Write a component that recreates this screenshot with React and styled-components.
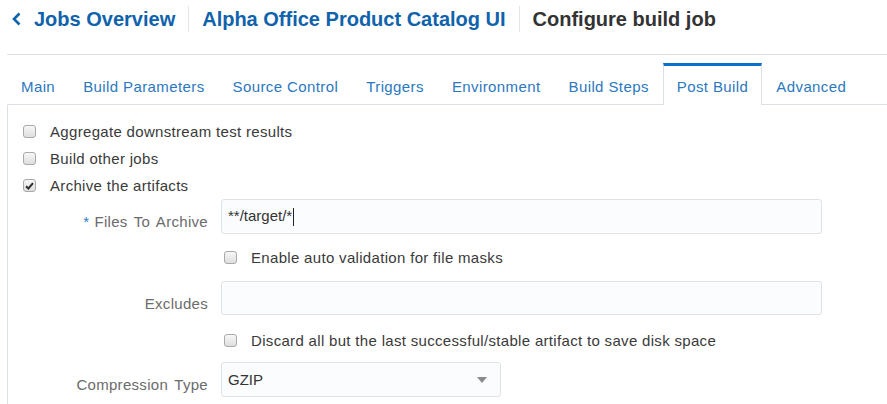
import React from "react";
import styled, { createGlobalStyle } from "styled-components";

const Global = createGlobalStyle`
  html, body { margin: 0; padding: 0; background: #fff; }
  body { font-family: "Liberation Sans", Arial, sans-serif; color: #333; }
  * { box-sizing: border-box; }
`;

const Page = styled.div`
  width: 887px;
  height: 404px;
  overflow: hidden;
  background: #fff;
`;

const Header = styled.div`
  margin-left: 7px;
  height: 55px;
  border-bottom: 1px solid #dfe3e7;
`;

const Crumbs = styled.div`
  display: flex;
  align-items: center;
  height: 38px;
  padding-left: 5px;
`;

const BackLink = styled.a`
  display: flex;
  align-items: center;
  gap: 13px;
  color: #0f62ac;
  font-size: 20px;
  font-weight: bold;
  text-decoration: none;
`;

const Crumb = styled.span`
  color: ${(p) => (p.$current ? "#333" : "#0f62ac")};
  font-size: 20px;
  font-weight: bold;
  white-space: nowrap;
`;

const Sep = styled.span`
  width: 1px;
  height: 26px;
  background: #e2e6e9;
  margin: 0 13px;
`;

const TabBar = styled.div`
  display: flex;
  margin: 8px 0 0 7px;
  height: 41px;
  position: relative;
  z-index: 1;
`;

const Tab = styled.div`
  height: 41px;
  padding: 2px 13px 0;
  display: flex;
  align-items: center;
  font-size: 15px;
  letter-spacing: 0.4px;
  color: #2b78bf;
  white-space: nowrap;
  border: 1px solid transparent;
  border-top: 3px solid transparent;
  border-bottom: none;
  ${(p) =>
    p.$active &&
    `
    border-color: #dbe0e4;
    border-top-color: #0a70cc;
    background: #fff;
    height: 42px;
    margin-bottom: -1px;
  `}
`;

const Panel = styled.div`
  margin-left: 7px;
  border-top: 1px solid #dbe0e4;
  border-left: 1px solid #dbe0e4;
  border-top-left-radius: 2px;
  padding: 13px 0 0 15px;
  height: 300px;
`;

const CheckRow = styled.label`
  display: flex;
  align-items: center;
  height: 27px;
  gap: 14px;
  font-size: 15px;
  letter-spacing: 0.32px;
  color: #3a3a3a;
  margin: ${(p) => p.$m || "0"};
  padding-left: ${(p) => p.$indent || "0"};
`;

const Box = styled.span`
  width: 13px;
  height: 13px;
  flex: none;
  border: 1px solid #a9a9a9;
  border-radius: 3px;
  background: linear-gradient(#f7f7f7, #dedede);
  display: flex;
  align-items: center;
  justify-content: center;
`;

const Check = ({ checked }) => (
  <Box>
    {checked && (
      <svg width="9" height="8" viewBox="0 0 9 8">
        <path d="M1 4.2 L3.4 6.5 L8 1.2" fill="none" stroke="#2f2f2f" strokeWidth="2" />
      </svg>
    )}
  </Box>
);

const FormRow = styled.div`
  display: flex;
  align-items: flex-start;
  gap: 13px;
`;

const Label = styled.div`
  width: 185px;
  text-align: right;
  padding-top: 13px;
  line-height: 20px;
  font-size: 15px;
  letter-spacing: 0.3px;
  word-spacing: 2px;
  color: #6b6b6b;
  white-space: nowrap;
`;

const Star = styled.span`
  color: #2a7ec4;
  margin-right: 5px;
`;

const Field = styled.div`
  width: ${(p) => p.$w}px;
  height: ${(p) => p.$h || 35}px;
  border: 1px solid #dfe3e6;
  border-radius: 3px;
  background: #fbfcfd;
  display: flex;
  align-items: center;
  padding: 0 7px 0 6px;
  font-size: 15px;
  color: #333;
  justify-content: space-between;
`;

const Caret = styled.span`
  display: inline-block;
  width: 1px;
  height: 18px;
  background: #222;
  vertical-align: middle;
  margin-left: 1px;
`;

const Arrow = styled.span`
  width: 0;
  height: 0;
  border-left: 5px solid transparent;
  border-right: 5px solid transparent;
  border-top: 6px solid #8a8a8a;
  margin-right: 6px;
`;

const ChevronLeft = () => (
  <svg width="9" height="14" viewBox="0 0 9 14">
    <path d="M7.5 1.5 L2 7 L7.5 12.5" fill="none" stroke="#0f62ac" strokeWidth="2.6" />
  </svg>
);

const tabs = [
  "Main",
  "Build Parameters",
  "Source Control",
  "Triggers",
  "Environment",
  "Build Steps",
  "Post Build",
  "Advanced",
];

export default function App() {
  return (
    <Page>
      <Global />
      <Header>
        <Crumbs>
          <BackLink>
            <ChevronLeft />
            <span>Jobs Overview</span>
          </BackLink>
          <Sep />
          <Crumb>Alpha Office Product Catalog UI</Crumb>
          <Sep />
          <Crumb $current>Configure build job</Crumb>
        </Crumbs>
      </Header>
      <TabBar>
        {tabs.map((t) => (
          <Tab key={t} $active={t === "Post Build"}>
            {t}
          </Tab>
        ))}
      </TabBar>
      <Panel>
        <CheckRow>
          <Check />
          Aggregate downstream test results
        </CheckRow>
        <CheckRow>
          <Check />
          Build other jobs
        </CheckRow>
        <CheckRow>
          <Check checked />
          Archive the artifacts
        </CheckRow>
        <FormRow>
          <Label>
            <Star>*</Star>Files To Archive
          </Label>
          <Field $w={601}>
            <span>
              **/target/*
              <Caret />
            </span>
          </Field>
        </FormRow>
        <CheckRow $indent="201px" $m="10px 0 10px 0">
          <Check />
          Enable auto validation for file masks
        </CheckRow>
        <FormRow>
          <Label>Excludes</Label>
          <Field $w={601} $h={34} />
        </FormRow>
        <CheckRow $indent="201px" $m="12px 0 8px 0">
          <Check />
          Discard all but the last successful/stable artifact to save disk space
        </CheckRow>
        <FormRow>
          <Label>Compression Type</Label>
          <Field $w={280}>
            <span>GZIP</span>
            <Arrow />
          </Field>
        </FormRow>
      </Panel>
    </Page>
  );
}
